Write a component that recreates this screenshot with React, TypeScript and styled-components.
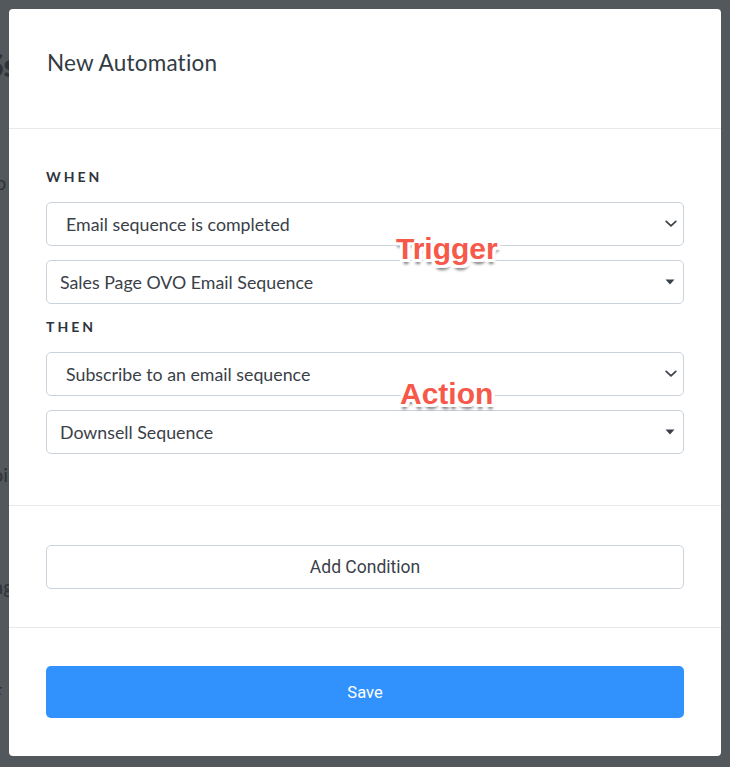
import React from "react";
import styled, { createGlobalStyle } from "styled-components";

const Global = createGlobalStyle`
  html, body { margin: 0; padding: 0; background: #53585d; }
  * { box-sizing: border-box; }
`;

const Screen = styled.div`
  position: relative;
  width: 730px;
  height: 767px;
  overflow: hidden;
  background: #53585d;
`;

const BackPage = styled.div`
  display: flex;
  flex-direction: column;
  font-family: Lato, "Open Sans", sans-serif;
  color: #2f3338;
`;

const BackLine = styled.div<{ $top: number; $left: number; $size: number; $bold?: boolean; $right?: boolean }>`
  margin-top: ${(p) => p.$top}px;
  margin-left: ${(p) => p.$left}px;
  font-size: ${(p) => p.$size}px;
  font-weight: ${(p) => (p.$bold ? 800 : 400)};
  line-height: 1.2;
  white-space: nowrap;
  display: flex;
  justify-content: space-between;
  width: ${(p) => (p.$right ? "750px" : "auto")};
`;

const Overlay = styled.div`
  position: absolute;
  inset: 0;
  padding: 9px;
`;

const Modal = styled.div`
  position: relative;
  width: 712px;
  height: 747px;
  background: #ffffff;
  border-radius: 4px;
  display: flex;
  flex-direction: column;
  font-family: Lato, "Open Sans", sans-serif;
  color: #363d45;
`;

const Header = styled.div`
  height: 121px;
  padding: 40px 38px 0;
  border-bottom: 1px solid #e7e9ec;
`;

const Title = styled.h2`
  margin: 0;
  font-size: 22.5px;
  font-weight: 400;
  letter-spacing: 0.2px;
  line-height: 28px;
  color: #333b43;
`;

const Section = styled.div<{ $pt: number; $pb: number; $border?: boolean }>`
  padding: ${(p) => p.$pt}px 37px ${(p) => p.$pb}px;
  border-bottom: ${(p) => (p.$border ? "1px solid #e7e9ec" : "none")};
  display: flex;
  flex-direction: column;
`;

const Label = styled.div`
  font-size: 14px;
  font-weight: 700;
  letter-spacing: 3px;
  line-height: 20px;
  color: #2e353d;
  margin-bottom: 15px;
`;

const Group = styled.div`
  display: flex;
  flex-direction: column;
  gap: 14px;
  margin-bottom: 13px;
`;

const SelectBox = styled.div<{ $pad: number }>`
  height: 44px;
  border: 1px solid #cbd2db;
  border-radius: 5px;
  padding: 0 6px 0 ${(p) => p.$pad}px;
  display: flex;
  align-items: center;
  justify-content: space-between;
  font-size: 17.8px;
  color: #3a4048;
`;

const IconSlot = styled.span<{ $mr: number }>`
  display: flex;
  align-items: center;
  margin-right: ${(p) => p.$mr}px;
  color: #3a4149;
`;

const OutlineButton = styled.button`
  height: 44px;
  width: 100%;
  border: 1px solid #cbd2db;
  border-radius: 5px;
  background: #fff;
  font-family: Roboto, "Liberation Sans", sans-serif;
  font-size: 17.5px;
  color: #3b4149;
  cursor: pointer;
`;

const PrimaryButton = styled.button`
  height: 52px;
  width: 100%;
  border: none;
  border-radius: 5px;
  background: #3192fd;
  font-family: Roboto, "Liberation Sans", sans-serif;
  font-size: 16.5px;
  color: #ffffff;
  cursor: pointer;
`;

const Annotation = styled.div<{ $x: number; $y: number }>`
  position: absolute;
  left: ${(p) => p.$x}px;
  top: ${(p) => p.$y}px;
  font-family: "Liberation Sans", Arial, sans-serif;
  font-weight: 700;
  font-size: 30px;
  color: #f6584a;
  white-space: nowrap;
  text-shadow:
    2px 0 0 #fff, -2px 0 0 #fff, 0 2px 0 #fff, 0 -2px 0 #fff,
    2px 2px 0 #fff, -2px -2px 0 #fff, 2px -2px 0 #fff, -2px 2px 0 #fff,
    3px 0 0 #fff, -3px 0 0 #fff, 0 3px 0 #fff, 0 -3px 0 #fff,
    3px 3px 0 #fff, -3px 3px 0 #fff,
    1px 5px 3px rgba(0, 0, 0, 0.55);
`;

const Chevron = () => (
  <svg width="12" height="8" viewBox="0 0 12 8" fill="none">
    <polyline points="1.2,1.3 6,5.8 10.8,1.3" stroke="currentColor" strokeWidth="1.7" strokeLinecap="round" strokeLinejoin="round" />
  </svg>
);

const Caret = () => (
  <svg width="10" height="6" viewBox="0 0 10 6">
    <polygon points="0.5,0.5 9.5,0.5 5,5.5" fill="currentColor" />
  </svg>
);

const Select = ({ text, kind }: { text: string; kind: "native" | "caret" }) => (
  <SelectBox $pad={kind === "native" ? 19 : 13}>
    <span>{text}</span>
    <IconSlot $mr={kind === "native" ? 0 : 2}>{kind === "native" ? <Chevron /> : <Caret />}</IconSlot>
  </SelectBox>
);

export default function App() {
  return (
    <>
      <Global />
      <Screen>
        <BackPage>
          <BackLine $top={46} $left={-14} $size={32} $bold>
            Ss
          </BackLine>
          <BackLine $top={86} $left={-12} $size={20}>
            to
          </BackLine>
          <BackLine $top={268} $left={-8} $size={20}>
            oi
          </BackLine>
          <BackLine $top={88} $left={-8} $size={20}>
            ng
          </BackLine>
          <BackLine $top={83} $left={-9} $size={20} $right>
            <span>F</span>
            <span>e</span>
          </BackLine>
        </BackPage>
        <Overlay>
          <Modal>
            <Header>
              <Title>New Automation</Title>
            </Header>
            <Section $pt={38} $pb={38} $border>
              <Label>WHEN</Label>
              <Group>
                <Select text="Email sequence is completed" kind="native" />
                <Select text="Sales Page OVO Email Sequence" kind="caret" />
              </Group>
              <Label>THEN</Label>
              <Group>
                <Select text="Subscribe to an email sequence" kind="native" />
                <Select text="Downsell Sequence" kind="caret" />
              </Group>
            </Section>
            <Section $pt={39} $pb={38} $border>
              <OutlineButton>Add Condition</OutlineButton>
            </Section>
            <Section $pt={38} $pb={38}>
              <PrimaryButton>Save</PrimaryButton>
            </Section>
            <Annotation $x={387} $y={223}>Trigger</Annotation>
            <Annotation $x={391} $y={368}>Action</Annotation>
          </Modal>
        </Overlay>
      </Screen>
    </>
  );
}
